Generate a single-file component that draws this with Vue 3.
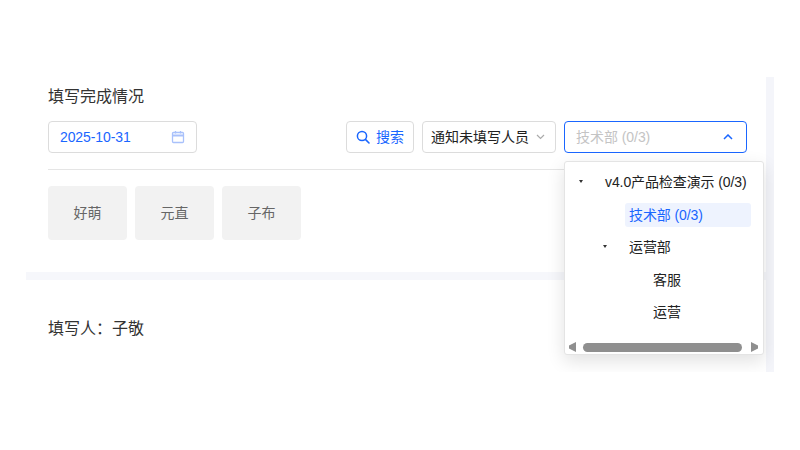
<script setup>
const tags = ['好萌', '元直', '子布']
</script>

<template>
  <div class="page">
    <div class="panel">
      <div class="main">
        <section class="top">
          <h2 class="title">填写完成情况</h2>
          <div class="toolbar">
            <div class="date">
              <span class="date-text">2025-10-31</span>
              <svg class="cal" width="14" height="14" viewBox="0 0 14 14" fill="none">
                <path d="M1.5 3.5a1 1 0 0 1 1-1h9a1 1 0 0 1 1 1v8a1 1 0 0 1-1 1h-9a1 1 0 0 1-1-1z" stroke="#a9c1fb" stroke-width="1.3"/>
                <path d="M1.5 5.5h11" stroke="#a9c1fb" stroke-width="2"/>
                <path d="M4.5 1v2.5M9.5 1v2.5" stroke="#a9c1fb" stroke-width="1.3"/>
              </svg>
            </div>
            <div class="spacer"></div>
            <button class="btn search">
              <svg width="14" height="14" viewBox="0 0 14 14" fill="none">
                <circle cx="6" cy="6" r="4.6" stroke="#1a66ff" stroke-width="1.5"/>
                <path d="M9.4 9.4L13 13" stroke="#1a66ff" stroke-width="1.6" stroke-linecap="round"/>
              </svg>
              <span>搜索</span>
            </button>
            <button class="btn notify">
              <span>通知未填写人员</span>
              <svg width="9" height="6" viewBox="0 0 9 6" fill="none">
                <path d="M1 1l3.5 3.5L8 1" stroke="#aaa" stroke-width="1.2"/>
              </svg>
            </button>
            <div class="select">
              <span class="placeholder">技术部 (0/3)</span>
              <svg width="10" height="6" viewBox="0 0 10 6" fill="none">
                <path d="M1 5l4-4 4 4" stroke="#1a66ff" stroke-width="1.5"/>
              </svg>
              <div class="popup">
                <div class="tree">
                  <div class="node root"><i class="caret"></i><span>v4.0产品检查演示 (0/3)</span></div>
                  <div class="node lvl1"><span class="active">技术部 (0/3)</span></div>
                  <div class="node lvl1b"><i class="caret"></i><span>运营部</span></div>
                  <div class="node lvl2"><span>客服</span></div>
                  <div class="node lvl2"><span>运营</span></div>
                </div>
                <div class="hbar">
                  <svg width="7" height="10" viewBox="0 0 7 10"><polygon points="7,0 7,10 0,6.5 0,3.5" fill="#8f8f8f"/></svg>
                  <div class="thumb"></div>
                  <svg width="7" height="10" viewBox="0 0 7 10"><polygon points="0,0 0,10 7,6.5 7,3.5" fill="#8f8f8f"/></svg>
                </div>
              </div>
            </div>
          </div>
          <div class="tags">
            <div v-for="t in tags" :key="t" class="tag">{{ t }}</div>
          </div>
        </section>
        <div class="gap"></div>
        <div class="filler">填写人：子敬</div>
      </div>
      <div class="vbar"></div>
    </div>
  </div>
</template>

<style>
html, body { margin: 0; background: #fff; }
</style>

<style scoped>
.page {
  width: 800px;
  height: 450px;
  padding: 77px 26px 78px;
  box-sizing: border-box;
  overflow: hidden;
  font-family: "Liberation Sans", "Noto Sans CJK SC", sans-serif;
  color: #333;
}
.panel { display: flex; height: 295px; overflow: hidden; }
.main { width: 740px; flex: none; }
.vbar { width: 8px; background: #f4f5fa; }
.top { padding: 0 19px 0 22px; height: 195px; box-sizing: border-box; }
.title { margin: 0; font-size: 16px; font-weight: 400; line-height: 22px; padding-top: 9px; color: #333; }
.toolbar {
  margin-top: 13px;
  display: flex;
  gap: 8px;
  align-items: stretch;
  height: 32px;
  padding-bottom: 16px;
  border-bottom: 1px solid #e5e5e5;
  box-sizing: content-box;
}
.date {
  width: 149px;
  box-sizing: border-box;
  border: 1px solid #dcdcdc;
  border-radius: 4px;
  display: flex;
  align-items: center;
  justify-content: space-between;
  padding: 0 11px;
  font-size: 14px;
  line-height: 20px;
  letter-spacing: -0.1px;
  color: #1a66ff;
}
.spacer { flex: 1; }
.btn {
  box-sizing: border-box;
  border: 1px solid #dcdcdc;
  border-radius: 4px;
  background: #fff;
  display: flex;
  align-items: center;
  font: inherit;
  font-size: 14px;
  line-height: 20px;
  padding: 0;
}
.search { width: 68px; justify-content: center; gap: 6px; color: #1a66ff; }
.notify { width: 134px; padding-left: 8px; gap: 7px; color: #222; }
.select {
  position: relative;
  width: 183px;
  box-sizing: border-box;
  border: 1px solid #1a66ff;
  border-radius: 4px;
  display: flex;
  align-items: center;
  justify-content: space-between;
  padding: 0 13px 0 11px;
  font-size: 14px;
  line-height: 20px;
}
.placeholder { color: #c4c4c4; letter-spacing: -0.05px; }
.popup {
  position: absolute;
  left: -1px;
  top: 39px;
  width: 200px;
  height: 194px;
  box-sizing: border-box;
  background: #fff;
  border: 1px solid #e4e4e4;
  border-radius: 3px;
  box-shadow: 0 6px 18px rgba(0, 0, 0, 0.12);
  z-index: 5;
  color: #222;
}
.tree { padding-top: 4px; height: 172px; box-sizing: border-box; letter-spacing: -0.1px; }
.node { display: flex; align-items: center; height: 32.5px; font-size: 14px; line-height: 20px; white-space: nowrap; position: relative; }
.root { padding-left: 40px; }
.lvl1 { padding-left: 60px; }
.lvl1b { padding-left: 64px; }
.lvl2 { padding-left: 88px; }
.caret {
  position: absolute;
  top: 14px;
  width: 0; height: 0;
  border-left: 2.5px solid transparent;
  border-right: 2.5px solid transparent;
  border-top: 3px solid #333;
}
.root .caret { left: 13.5px; }
.lvl1b .caret { left: 37.5px; }
.active {
  width: 126px;
  height: 24px;
  line-height: 24px;
  padding-left: 4px;
  box-sizing: border-box;
  background: #eef3fe;
  border-radius: 3px;
  color: #1a66ff;
}
.hbar { display: flex; align-items: center; padding: 0 4px; height: 16px; margin-top: 5px; }
.thumb { width: 159px; height: 9px; margin: 0 9px 0 7px; border-radius: 5px; background: #8f8f8f; }
.tags { display: flex; gap: 8px; margin-top: 16px; }
.tag {
  width: 79px;
  height: 54px;
  background: #f2f2f2;
  border-radius: 4px;
  display: flex;
  align-items: center;
  justify-content: center;
  font-size: 14px;
  line-height: 20px;
  color: #666;
}
.gap { height: 8px; background: #f6f7fb; }
.filler { padding: 38px 22px 0; font-size: 16px; line-height: 22px; color: #333; }
</style>
